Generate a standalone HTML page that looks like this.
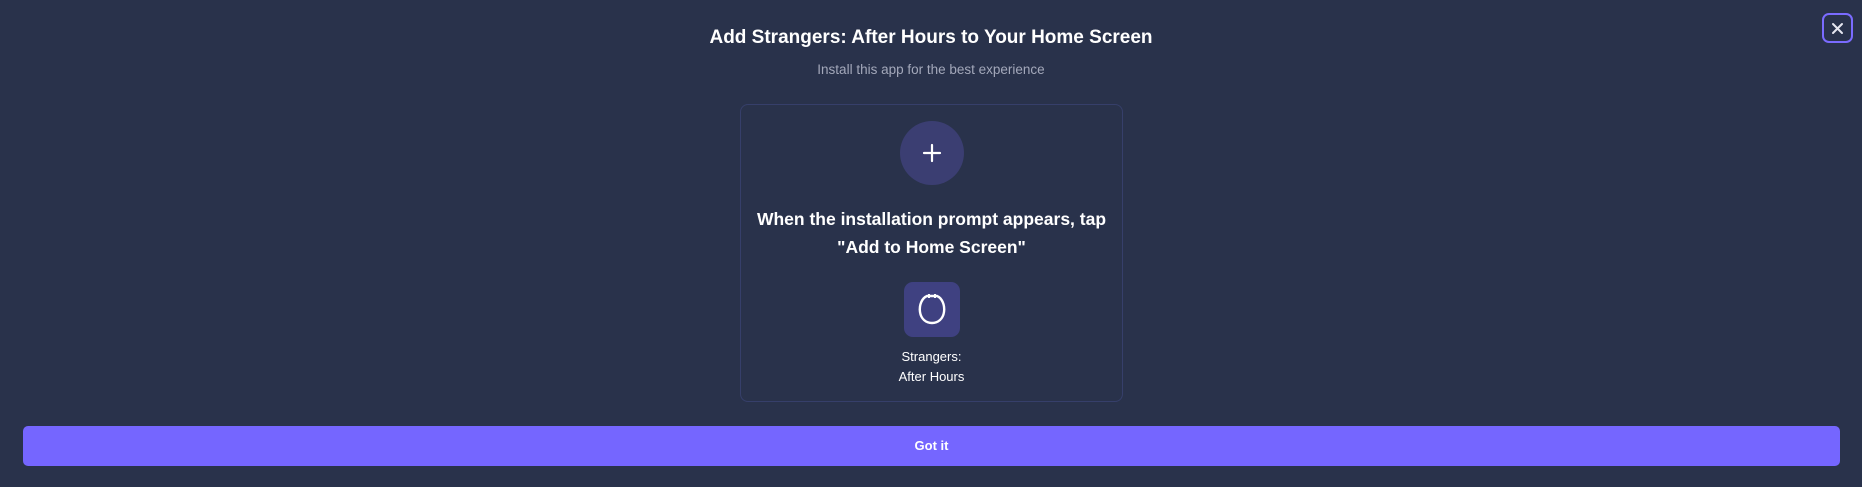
<!DOCTYPE html>
<html><head><meta charset="utf-8"><style>
*{margin:0;padding:0;box-sizing:border-box}
body{width:1862px;height:487px;background:#29324b;font-family:"Liberation Sans",sans-serif;color:#fff;position:relative;overflow:hidden}
.t{position:absolute;top:27px;left:0;width:1862px;text-align:center;font-weight:bold;font-size:19px}
.s{position:absolute;top:62px;left:0;width:1862px;text-align:center;font-size:13.5px;color:#a3a8ba}
.card{position:absolute;left:740px;top:104px;width:383px;height:298px;border:1px solid #363f6a;border-radius:8px}
.c{position:absolute;left:900px;top:121px;width:64px;height:64px;border-radius:50%;background:#3b3e72}
.h{position:absolute;left:740px;width:383px;top:205px;text-align:center;font-weight:bold;font-size:17.5px;line-height:28px}
.a{position:absolute;left:904px;top:282px;width:56px;height:55px;border-radius:9px;background:#3f4181}
.l{position:absolute;left:740px;width:383px;top:347px;text-align:center;font-size:13px;line-height:20px}
.x{position:absolute;left:1822px;top:13px;width:31px;height:30px;border:2px solid #7a6bff;border-radius:7px}
.b{position:absolute;left:23px;top:426px;width:1817px;height:40px;border-radius:5px;background:#7566ff;text-align:center;line-height:40px;font-weight:bold;font-size:13px}
</style></head><body>
<div class="t">Add Strangers: After Hours to Your Home Screen</div>
<div class="s">Install this app for the best experience</div>
<div class="card"></div>
<div class="c"><svg width="64" height="64"><path d="M32 24v16M24 32h16" stroke="#fff" stroke-width="2.2" stroke-linecap="round"/></svg></div>
<div class="h">When the installation prompt appears, tap<br>"Add to Home Screen"</div>
<div class="a"><svg width="56" height="55"><path d="M23 14 C18 16 15 23 16 30 C17 37 22 41 28 41 C34 41 39 37 40 30 C41 23 38 16 33 14 Z" fill="none" stroke="#fff" stroke-width="2.4"/><path d="M25 12v4M31 12v4" stroke="#fff" stroke-width="2"/></svg></div>
<div class="l">Strangers:<br>After Hours</div>
<div class="x"><svg width="27" height="26"><path d="M9 9l9 9M18 9l-9 9" stroke="#e6e6f0" stroke-width="2" stroke-linecap="round"/></svg></div>
<div class="b">Got it</div>
</body></html>
